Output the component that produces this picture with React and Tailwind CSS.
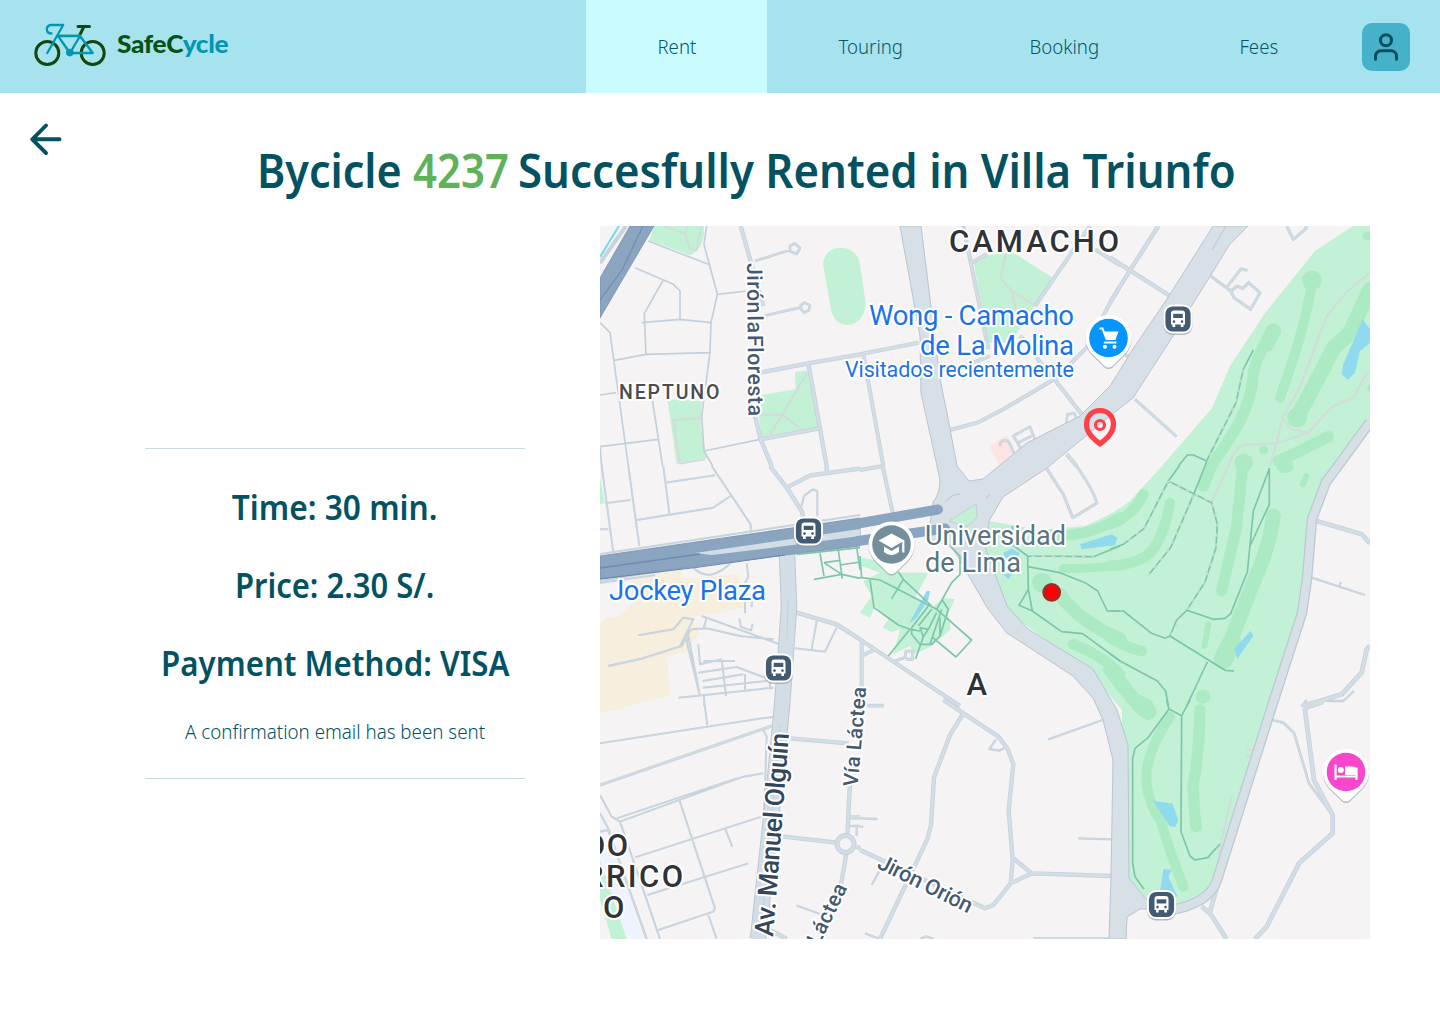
import React from "react";

const NAV = ["Rent", "Touring", "Booking", "Fees"];

function Logo() {
  return (
    <div className="flex items-center">
      <svg className="h-[44px] w-[74px]" viewBox="33 23 74 44" fill="none" strokeLinecap="round" strokeLinejoin="round">
        <g stroke="#14470f" strokeWidth="3">
          <circle cx="47.3" cy="53" r="11.5" />
          <circle cx="92.7" cy="53" r="11.5" />
          <path d="M78 26.6h11.5M83.5 27.5l-4 8" />
        </g>
        <path d="M59 35.2h21" stroke="#5fbf9b" strokeWidth="1.4" />
        <g stroke="#0296b4" strokeWidth="2.3">
          <path d="M47.3 53L63.2 25H50.5c-5 1-5 8.5 1 8.5M58 36h22L70 53 58 36M80 36l12.7 17H70" />
        </g>
        <circle cx="69.8" cy="52.6" r="3.8" fill="#0296b4" />
      </svg>
      <span className="-mt-0.5 ml-[10px] inline-block w-[104px] origin-left scale-x-[1.09] font-['Lato'] text-[24px] leading-[30px] font-black tracking-[-0.3px] text-[#075216]">
        SafeC<span className="text-[#0396b3]">ycle</span>
      </span>
    </div>
  );
}

function Header() {
  return (
    <header className="flex h-[93px] items-center bg-[#a7e3ee] pr-[30px] pl-[33px]">
      <div className="-mt-1 flex-1"><Logo /></div>
      <nav className="flex h-full gap-[13px]">
        {NAV.map((n, i) => (
          <a key={n} className={"flex w-[181px] items-center justify-center text-[20px] font-light text-[#055766] " + (i === 0 ? "bg-[#c9fbff]" : "")}>
            <span className="mt-px inline-block scale-x-[0.93]">{n}</span>
          </a>
        ))}
      </nav>
      <button className="ml-[13px] flex size-12 items-center justify-center rounded-[10px] bg-[#45b2c9]">
        <svg className="size-8" viewBox="0 0 32 32" fill="none" stroke="#034e5c" strokeWidth="3" strokeLinecap="round">
          <circle cx="16" cy="9.2" r="5.5" />
          <path d="M5.5 28.3v-3a5.5 5.5 0 0 1 5.5-5.5h10a5.5 5.5 0 0 1 5.5 5.5v3" />
        </svg>
      </button>
    </header>
  );
}

/* Map sheet groups: drawn in a 780-unit local grid, three units per pixel. */
function Sheet({ x, y, children }) {
  return <g transform={`translate(${x} ${y}) scale(0.33333)`}>{children}</g>;
}

const AVENUE =
  "M900 226L920 336 921 393 937 466 940 480Q940 494 933 502L928 540 950 545 960 560 967 573 988 609 1007 633 1073 676 1093 698 1103 720 1113 760 1111 877 1109 939H1126L1127 917 1140 909 1160 909 1145 898 1129 878 1128 745 1117 710 1093 669 1028 629 1007 606 986 549 989 521 1003 497 1047 468 1110 416 1133 398 1173 336 1230 244 1248 226H1213L1167 299 1133 349 1110 386 1080 416 1027 443 983 479 969 481 957 466 947 413 940 379 921 226Z";

const STREETS = [
  [600, 226, 5, "M145 45L325 115M320 0L312 55 352 205 333 290 330 380 305 570 312 675 338 720M105 125L220 175 240 195V280M188 165L133 262 138 388M125 290L240 280 333 290M0 290L30 320 85 720M43 403L138 385 330 380M0 507L48 500M155 510L188 720M0 662L175 640M0 662L5 720M312 675L480 640M352 205L440 195"],
  [600, 226, 8, "M465 105L570 72M570 60l14-8 16 14-10 18-20-8ZM490 270L600 245M602 238l12-8 16 8-3 14-14 8-10-10Z"],
  [600, 226, 13, "M422 0L490 240M465 570L482 640 515 720M480 440L625 412 780 385M625 412L680 720M482 640L655 608"],
  [860, 226, 12, "M0 385L175 350M270 612L352 590 430 550 590 455 680 365 740 250 780 180M580 455L665 565M530 395L575 450M480 330L500 350M340 410L390 390M310 0L385 370M525 240L690 0M705 70L780 118M10 385L70 720M335 110L380 85M620 685L650 720"],
  [860, 226, 8, "M618 595l5-30 20-4 8 20M460 630l50-28 20 52-38 28ZM475 650l40-20M420 660c0-18 20-22 28-10l22 50"],
  [1110, 226, 13, "M145 0L62 130 0 230M0 95L180 210"],
  [1110, 226, 9, "M302 150L362 195 382 180 398 188 416 170 450 200 422 250 372 215 362 195M347 188l47-60 18 6M75 520L200 632M530 0l20 40 38-32V0M45 390l30-5"],
  [600, 466, 6, "M5 0L40 260M85 0L118 240M190 0L208 143M335 0L452 175V200M195 50L345 28M110 162L340 125 392 90M15 112L92 102M0 190H25M605 120L612 90 638 70 652 75V150M275 300Q330 360 400 282M440 292l5 40-10 20v90M455 385v38M0 345L180 315M115 508L220 490 250 455 280 460 240 540M305 450L540 535M275 490L320 487 420 510 520 520M320 455l-10 35M275 490Q258 500 262 535L300 690M235 695L520 665M310 585l95 0M295 535l5 60 65-15M295 620L410 603 520 645M308 645L430 625M308 665L500 645M365 580L378 690M435 625v50M510 640v30M418 458l5 25 30 10 5-20M312 690V720M265 510L300 690M650 465L635 550M585 547L675 557 710 485"],
  [600, 466, 7, "M25 600L125 578 245 540 262 510"],
  [600, 466, 13, "M510 0L560 65 605 135 610 155M560 65L630 28 780 8M680 0v20M590 440L710 475 780 520"],
  [860, 466, 12, "M0 520L300 720M68 0L98 140M0 12L68 0M5 525V720M5 570L45 550"],
  [860, 466, 9, "M560 8L610 85 638 155 710 112Q705 80 650 0M105 585l30-10 3-20h20v25h-20M20 720h50"],
  [600, 700, 6, "M312 0L322 75M0 130L520 50M490 90l10 20-8 240M0 285L35 350 60 365 180 717M60 365L430 230 490 220M50 355L410 235M238 300L345 625 340 635 175 690M105 472L485 350M375 385L397 440M142 585L445 490M325 645L350 717M590 617L660 642M0 340l30 55"],
  [600, 700, 9, "M0 255L515 78"],
  [600, 700, 13, "M570 115L745 130M550 410L710 428M750 250L742 405M740 455L722 560M510 690L560 717M770 440L780 446M750 352h30"],
  [600, 700, 7, "M25 390L140 717M0 395L25 390M750 378h30M770 378v30"],
  [860, 700, 13, "M250 0L415 110 442 145 460 192 446 330 458 480 452 550M310 40L270 105 222 232 213 375 203 415 60 717M0 450L375 625 400 615 452 550 515 520 755 528M460 475L515 520"],
  [860, 700, 7, "M408 118L388 147 418 152 440 140M565 118L728 60M655 415L755 418M60 510L35 555M0 355L52 357M0 380h10M180 717l18-8 25 8M15 700l45 17M520 715H748M20 15h52"],
  [1110, 466, 14, "M620 165L755 205 780 232M780 540L770 550 755 620 695 685 580 720"],
  [1110, 466, 7, "M605 335L765 387M688 360l5-12M650 705h50l32-30"],
  [1110, 700, 14, "M640 5L590 22 585 30 612 240 668 345V400L567 490 470 680 435 717M275 620L300 640 350 717M300 635l20-70"],
  [1110, 700, 8, "M485 60L520 68 552 98 597 250 660 335M590 0l-15 20"],
];

const FAIRWAYS = [
  [1110, 226, "M605 163Q595 280 510 515", 30],
  [1110, 226, "M605 163h2", 58],
  [1110, 226, "M480 330Q440 390 430 440 425 530 370 620L305 720", 34],
  [1110, 226, "M490 315L470 355", 46],
  [1110, 226, "M780 190L720 320Q690 350 670 365 640 430 560 575", 46],
  [1110, 226, "M560 575h2", 58],
  [1110, 226, "M655 632L560 680 505 705", 34],
  [1110, 226, "M400 710h2", 54],
  [1110, 226, "M460 672h2M770 30h20M785 485h5", 26],
  [1110, 466, "M0 175Q70 150 100 85", 32],
  [1110, 466, "M180 112Q155 240 105 272 70 295 0 300", 32],
  [1110, 466, "M305 0L280 60", 34],
  [1110, 466, "M398 0Q390 80 380 180L335 375", 34],
  [1110, 466, "M490 150Q480 240 430 350 390 450 360 530", 44],
  [1110, 466, "M340 580L365 530", 58],
  [1110, 466, "M0 515Q50 545 95 555", 32],
  [1110, 466, "M0 610L70 700 110 720", 42],
  [1110, 466, "M278 692h2M520 0h10", 42],
  [1110, 466, "M295 475L283 540M590 30L578 55", 18],
  [860, 466, "M780 155Q690 208 610 208L550 205", 32],
  [860, 466, "M610 308Q690 308 780 298", 26],
  [860, 466, "M545 350h2", 58],
  [860, 466, "M600 385Q650 460 780 520", 40],
  [860, 466, "M640 535Q730 570 780 625", 32],
  [1110, 700, "M180 50Q100 170 110 250 115 310 155 370 170 430 220 560", 30],
  [1110, 700, "M270 30Q265 180 250 250 250 310 258 380", 34],
  [1110, 700, "M85 10L115 35", 50],
];

const TRAILS = [
  [1110, 226, "M430 372L400 430 378 530 290 705 285 720M205 720L232 687H250L290 705"],
  [1110, 466, "M208 0L175 45 102 188 40 235 0 250M285 0L250 88 182 245 115 327M175 45L305 110 322 175 318 245 285 348 230 433 200 462 180 510M230 433L310 460 345 457 362 443 412 318 430 135 478 8V115L420 240M0 435H40L125 502 165 517 180 510 345 613 372 615M292 588L230 720M0 563L30 585 142 645 167 675 175 720"],
  [1110, 700, "M170 0L177 27 215 47 240 0M177 27L115 112 75 145 68 175V490L75 530 102 568M215 47L213 395 240 468 255 480 293 473 330 432"],
  [860, 466, "M455 235L503 270 700 272 780 240M503 270L505 370 517 435 477 418 505 370M503 302L600 320 675 350 713 375 742 435H780M517 435L605 497 668 503 780 585M457 235v-55"],
];

const CAMPUS = [
  [600, 466, "M590 265L780 245M660 262L672 330M715 252L727 338M672 290L720 283M720 297L780 288M672 290L725 325 780 337M642 340L725 325M770 245L780 310"],
  [860, 466, "M0 270L5 335 60 342 230 430 335 522 288 573 215 512M0 335H5M30 342L42 425 115 477 150 490 85 570M115 318L130 340 95 398M130 340L215 420M230 430L275 350 300 325M300 325V270L270 240M205 420L155 485V505L180 535H215L240 510 265 430 245 400M180 485L205 490 190 512ZM150 490L180 495M205 490L230 440M190 512L167 578M215 430L175 480M245 430L210 535M240 455V510"],
];

function Roads() {
  return (
    <g fill="none" strokeLinejoin="round">
      <g stroke="#c3d0db">
        {STREETS.map(([x, y, w, d], i) => (
          <Sheet key={i} x={x} y={y}><path d={d} strokeWidth={w} /></Sheet>
        ))}
      </g>
      <g stroke="#d2dde5">
        {STREETS.filter((s) => s[2] > 5).map(([x, y, w, d], i) => (
          <Sheet key={i} x={x} y={y}><path d={d} strokeWidth={w > 11 ? w - 4 : w - 4.5} /></Sheet>
        ))}
      </g>
    </g>
  );
}

function BusStop({ x, y }) {
  return (
    <g transform={`translate(${x} ${y})`}>
      <rect x="-14.5" y="-13" width="29" height="29" rx="9" fill="#8d969d" opacity=".6" />
      <rect x="-14.5" y="-14.5" width="29" height="29" rx="9" fill="#fff" />
      <rect x="-12.6" y="-12.6" width="25.2" height="25.2" rx="7.5" fill="#425b72" />
      <path d="M-7-5.5Q-7-8.5-4-8.5H4Q7-8.5 7-5.5V5.5H5.5V8H2.8V5.5H-2.8V8H-5.5V5.5H-7Z" fill="#fff" />
      <path d="M-4.8-5.2H4.8V-1H-4.8Z" fill="#425b72" />
      <circle cx="-4" cy="2.6" r="1.3" fill="#425b72" />
      <circle cx="4" cy="2.6" r="1.3" fill="#425b72" />
    </g>
  );
}

function Pin({ x, y, color, children }) {
  const drop = "M0-23A23 23 0 0 1 23 0C23 10 16 17 10 22L4 28Q0 31-4 28L-10 22C-16 17-23 10-23 0A23 23 0 0 1 0-23Z";
  return (
    <g transform={`translate(${x} ${y})`}>
      <path d={drop} transform="translate(0 1.5)" fill="#7c858c" opacity=".5" />
      <path d={drop} fill="#fff" />
      <circle r="19.3" fill={color} />
      {children}
    </g>
  );
}

function Label({ x, y, w, size, fill = "#1a73e8", weight = 400, rotate = 0, halo = 4, className, children }) {
  return (
    <text
      x="0"
      y="0"
      className={className}
      transform={`translate(${x} ${y}) rotate(${rotate})`}
      textLength={w}
      lengthAdjust="spacing"
      fontSize={size}
      fontWeight={weight}
      fill={fill}
      stroke="#fff"
      strokeWidth={halo}
      strokeLinejoin="round"
      paintOrder="stroke"
    >
      {children}
    </text>
  );
}

function CityMap() {
  return (
    <svg className="h-[713px] w-[770px] shrink-0 bg-[#f5f3f4] font-['Roboto',sans-serif]" viewBox="600 226 770 713">
      {/* land cover */}
      <g fill="#c3f1d5">
        <path d="M1353 226L1315 251 1265 313 1230 366 1212 408 1162 466 1130 501Q1117 512 1085 526L1040 530 989 521 980 550 1005 610 1090 672 1122 710 1122 880 1145 905H1190L1210 895 1275 700 1305 610 1312 519 1330 475 1370 422V226Z" />
        <Sheet x={600} y={226}>
          <path d="M163 0H312Q315 70 270 88L148 42ZM670 120C665 50 770 45 780 115L797 230C795 310 705 320 693 250ZM202 520L305 525 302 600 320 695 230 713ZM468 510L587 490 585 438 622 433 660 607 485 635Z" />
        </Sheet>
        <Sheet x={860} y={226}><path d="M340 105L365 88 460 80 578 155 525 240 475 315 450 350H385Z" /></Sheet>
        <Sheet x={860} y={466}><path d="M5 275L90 290 115 320 205 320 165 395 215 425 250 395 285 400 265 440 272 490 215 540 165 565 150 540 100 565 120 490 95 498 68 485 85 460 45 420 30 455 0 440 35 390 10 345 60 320 5 300Z" /></Sheet>
        <Sheet x={600} y={466}><path d="M0 35L14 110 0 115Z" /></Sheet>
      </g>
      <g fill="#f7efdd">
        <Sheet x={600} y={466}>
          <path d="M90 345L180 315 245 310 250 340 415 325 430 425 270 455 300 495 262 560 200 570 210 690 130 705Q60 735 0 738V480L15 455 60 450 100 410Z" />
        </Sheet>
      </g>
      <Sheet x={860} y={226}><path d="M388 660L440 628 475 695 420 720Z" fill="#fde3e1" /></Sheet>
      <Sheet x={600} y={700}>
        <path d="M0 345L130 717H80L0 480Z" fill="#eff3ff" />
        <path d="M0 480L80 717H35L0 600Z" fill="#c3f1d5" />
      </Sheet>
      <g fill="none" stroke="#aceac4" strokeLinecap="round" strokeLinejoin="round">
        {FAIRWAYS.map(([x, y, d, w], i) => (
          <Sheet key={i} x={x} y={y}><path d={d} strokeWidth={w} /></Sheet>
        ))}
      </g>
      <g fill="#90daef">
        <Sheet x={1110} y={226}><path d="M758 280L780 310V350L750 375 735 440 713 462 695 445 700 415Z" /></Sheet>
        <Sheet x={1110} y={466}><path d="M0 207L22 215 13 240H0ZM422 494L430 510 382 578 372 550Z" /></Sheet>
        <Sheet x={860} y={466}><path d="M660 235L755 205 772 215 765 238 665 250ZM430 260L455 248 480 262 470 285 435 278ZM430 325L460 320 445 340ZM200 375H210L205 400 170 455 147 473Z" /></Sheet>
        <Sheet x={1110} y={700}><path d="M130 303L187 310 205 360 195 382 178 377ZM160 507L185 510 175 530 203 590 150 575Z" /></Sheet>
      </g>

      {/* streets and avenues */}
      <Roads />
      <g fill="none" stroke="#d3dbdc" strokeWidth="6">
        <Sheet x={600} y={226}>
          <path d="M190 0L255 22 262 0M255 22L270 70 290 72 303 0M302 577L220 582 240 713 315 700M622 440L508 630M475 567L547 565 605 612" />
        </Sheet>
        <Sheet x={860} y={226}><path d="M438 80L422 158 455 195 525 238M455 195L468 250" /></Sheet>
        <Sheet x={1110} y={226}><path d="M780 140L708 200 650 270 567 490 517 577 500 652 480 720M517 577L545 610 595 620 665 543 730 515 765 450 780 437M595 620L500 652 395 657 370 685 355 720" /></Sheet>
        <Sheet x={1110} y={466}><path d="M355 0L305 110" /></Sheet>
        <Sheet x={1110} y={700}><path d="M365 287L325 465M410 147l25 8M408 165l25 8" /></Sheet>
      </g>
      <g fill="none" strokeLinejoin="round">
        <path d="M1370 422L1338 466 1326 482 1312 519 1307 579 1302 613 1272 706 1217 880Q1209 905 1165 911L1148 906" stroke="#bcc8d2" strokeWidth="10.5" />
        <path d="M1370 422L1338 466 1326 482 1312 519 1307 579 1302 613 1272 706 1217 880Q1209 905 1165 911L1148 906" stroke="#d7dfe7" strokeWidth="8" />
        <path d="M787 554L789 606 785 666 782 706 773 800 758 939" stroke="#bcc8d2" strokeWidth="16.5" />
        <path d="M787 554L789 606 785 666 782 706 773 800 758 939" stroke="#d3dde5" strokeWidth="14.5" />
        <path d="M788 600L787 640M780 725L773 800 762 920" stroke="#c5d1dc" />
        <path d={AVENUE} fill="#d7dfe7" stroke="#b9c5cf" />
        <circle cx="845.5" cy="844" r="8.5" stroke="#c3d0db" strokeWidth="5" fill="#f5f3f4" />
        <circle cx="845.5" cy="844" r="8.5" stroke="#d2dde5" strokeWidth="3.5" />
        <path d="M1212 250L1226 226M945 502Q952 494 960 494M986 498l4-3" stroke="#b9c5cf" />
      </g>
      <path d="M949 521L976 504 977 517Q970 527 963 526Z" fill="#c3f1d5" stroke="#b9c5cf" strokeWidth=".7" />
      <g fill="none">
        <path d="M600 554L860 515M600 583L655 575" stroke="#c8d3dc" strokeWidth="2" />
        <path d="M600 556L860 518V546L785 555 600 579Z" fill="#8ba4c0" stroke="#7891b1" strokeWidth=".8" />
        <path d="M695 553L860 529V536L770 548 712 555Z" fill="#d3dde6" />
        <path d="M600 568L700 554" stroke="#6e8db4" strokeWidth="1.6" />
        <path d="M600 579L700 567 785 555" stroke="#6688b1" />
        <path d="M858 523.5L938 509.5M858 541L945 528.5" stroke="#8ba4c0" strokeWidth="10" strokeLinecap="round" />
        <path d="M630 226H654L600 318V278Z" fill="#8ba4c0" stroke="#7891b1" strokeWidth=".8" />
        <path d="M643 226L622 270 600 300" stroke="#6e8db4" strokeWidth="1.2" />
        <path d="M619 226L600 257" stroke="#70ddea" strokeWidth="2" />
        <path d="M626 226L600 263" stroke="#c8d3dc" strokeWidth="4" />
      </g>
      <g fill="none" stroke="#7bc6ac" strokeWidth="5" strokeLinejoin="round">
        {[...TRAILS, ...CAMPUS].map(([x, y, d], i) => (
          <Sheet key={i} x={x} y={y}><path d={d} /></Sheet>
        ))}
      </g>
      <g fill="none" stroke="#cbdcd5" strokeWidth="4" strokeDasharray="10 20">
        <Sheet x={1110} y={226}><path d="M400 430L378 530 290 705" /></Sheet>
        <Sheet x={1110} y={466}><path d="M175 45L102 188 40 235M250 88L182 245 115 327M175 45L305 110 322 175 318 245 285 348 230 433 180 510" /></Sheet>
        <Sheet x={860} y={466}><path d="M515 271L700 272" /></Sheet>
      </g>

      {/* district and street names */}
      <Label x={949} y={252} w={170} size={31} weight={500} fill="#2f3337">CAMACHO</Label>
      <Label x={619} y={399} w={100.5} size={19.5} weight={500} fill="#484d50">NEPTUNO</Label>
      <Label x={966.5} y={695} w={21} size={31} weight={500} fill="#2f3337">A</Label>
      <Label x={585} y={856} w={43} size={31} weight={500} fill="#2f3337">DO</Label>
      <Label x={584} y={887} w={99} size={31} weight={500} fill="#2f3337">RRICO</Label>
      <Label x={603} y={918} w={22} size={31} weight={500} fill="#2f3337">O</Label>
      <Label x={747} y={263} w={153} size={21.5} weight={500} fill="#465870" rotate={89.5} className="[word-spacing:-4px]">Jirón la Floresta</Label>
      <Label x={773} y={937} w={204} size={26.5} weight={500} fill="#33475c" rotate={-85.5}>Av. Manuel Olguín</Label>
      <Label x={857.5} y={787} w={100} size={20.5} weight={500} fill="#465870" rotate={-85}>Vía Láctea</Label>
      <Label x={819} y={946} w={65} size={21} weight={500} fill="#465870" rotate={-64}>Láctea</Label>
      <Label x={876} y={867.5} w={103} size={22} weight={500} fill="#465870" rotate={26.5}>Jirón Orión</Label>
      <Label x={869} y={325} w={205} size={27.5}>Wong - Camacho</Label>
      <Label x={920} y={355} w={154} size={27.5}>de La Molina</Label>
      <Label x={845} y={377} w={229} size={21.5}>Visitados recientemente</Label>
      <Label x={609} y={599.5} w={157} size={27.5}>Jockey Plaza</Label>
      <Label x={925} y={545} w={141} size={27} fill="#587480">Universidad</Label>
      <Label x={925} y={572} w={96} size={27} fill="#587480">de Lima</Label>

      {/* markers */}
      <BusStop x={1178} y={319} />
      <BusStop x={808.5} y={531} />
      <BusStop x={778.5} y={668} />
      <BusStop x={1161.5} y={904.5} />
      <Pin x={1108.5} y={338} color="#0595ff">
        <path d="M-9-9.5H-6L-2 1H7" fill="none" stroke="#fff" strokeWidth="2" />
        <path d="M-5-6.5H10L7 1.5H-2ZM-4 3.5H8V5.5H-5Z" fill="#fff" />
        <circle cx="-3.5" cy="8.8" r="2" fill="#fff" />
        <circle cx="6" cy="8.8" r="2" fill="#fff" />
      </Pin>
      <Pin x={891.5} y={544.5} color="#758e9b">
        <path d="M-13-4L0-11 13-4 0 3.5Z" fill="#fff" />
        <path d="M-7.5 2L0 6.5 7.5 2V7.5Q0 14-7.5 7.5Z" fill="#fff" />
        <path d="M11.8-4V8" stroke="#fff" strokeWidth="2.2" />
      </Pin>
      <Pin x={1346} y={772} color="#f846cd">
        <path d="M-10.5-7.5V8M10.5-4.5V8M-10.5 4.5H10.5" fill="none" stroke="#fff" strokeWidth="2.2" />
        <circle cx="-5.2" cy="-2" r="3" fill="#fff" />
        <path d="M-1-5.5H6Q11-5.5 11-1V3H-1Z" fill="#fff" />
      </Pin>
      <g fill="none" stroke="#ff4046">
        <path d="M1100 410.5C1091.8 410.5 1086.5 416.5 1086.5 424.5C1086.5 433 1094 439 1100 444C1106 439 1113.5 433 1113.5 424.5C1113.5 416.5 1108.2 410.5 1100 410.5Z" strokeWidth="5.2" strokeLinejoin="round" />
        <circle cx="1100" cy="425" r="4.5" strokeWidth="3.2" />
      </g>
      <circle cx="1051.7" cy="592.3" r="8" fill="#ff0000" stroke="#a42a2a" strokeWidth="2.8" />
    </svg>
  );
}

function Summary() {
  const line = "text-[35px] leading-[48px] font-semibold whitespace-nowrap";
  return (
    <section className="mt-[222px] flex h-[331px] w-[380px] shrink-0 flex-col items-center border-y border-[#c5dbe0] pt-[34px] text-[#035262]">
      <p className={line}><span className="inline-block scale-x-[0.905]">Time: 30 min.</span></p>
      <p className={line + " mt-[30px]"}><span className="inline-block scale-x-[0.885]">Price: 2.30 S/.</span></p>
      <p className={line + " mt-[30px]"}><span className="-mx-10 inline-block scale-x-[0.892]">Payment Method: VISA</span></p>
      <p className="mt-[31px] text-[20px] leading-[28px] font-light whitespace-nowrap"><span className="inline-block scale-x-[0.938]">A confirmation email has been sent</span></p>
    </section>
  );
}

export default function App() {
  return (
    <div className="flex h-[1024px] w-[1440px] flex-col overflow-hidden bg-white font-['Noto_Sans',sans-serif]">
      <Header />
      <main className="flex flex-1 flex-col">
        <div className="flex h-[133px] pl-[29px]">
          <button className="mt-[29px] size-[34px]">
            <svg className="size-[34px]" viewBox="0 0 34 34" fill="none" stroke="#04525f" strokeWidth="3.9" strokeLinecap="round" strokeLinejoin="round">
              <path d="M17 3.5L3.3 17.3 17 31M3.3 17.3H30.5" />
            </svg>
          </button>
          <h1 className="mt-[44px] ml-[194px] flex h-[66px] text-[47px] leading-[66px] font-semibold whitespace-nowrap text-[#035262]">
            <span className="w-[156px] origin-left scale-x-[0.916]">Bycicle </span>
            <span className="w-[105px] origin-left scale-x-[0.893] text-[#60b25a]">4237 </span>
            <span className="w-[780px] origin-left scale-x-[0.931]">Succesfully Rented in Villa Triunfo</span>
          </h1>
        </div>
        <div className="flex items-start gap-[75px] pl-[145px]">
          <Summary />
          <CityMap />
        </div>
      </main>
    </div>
  );
}
